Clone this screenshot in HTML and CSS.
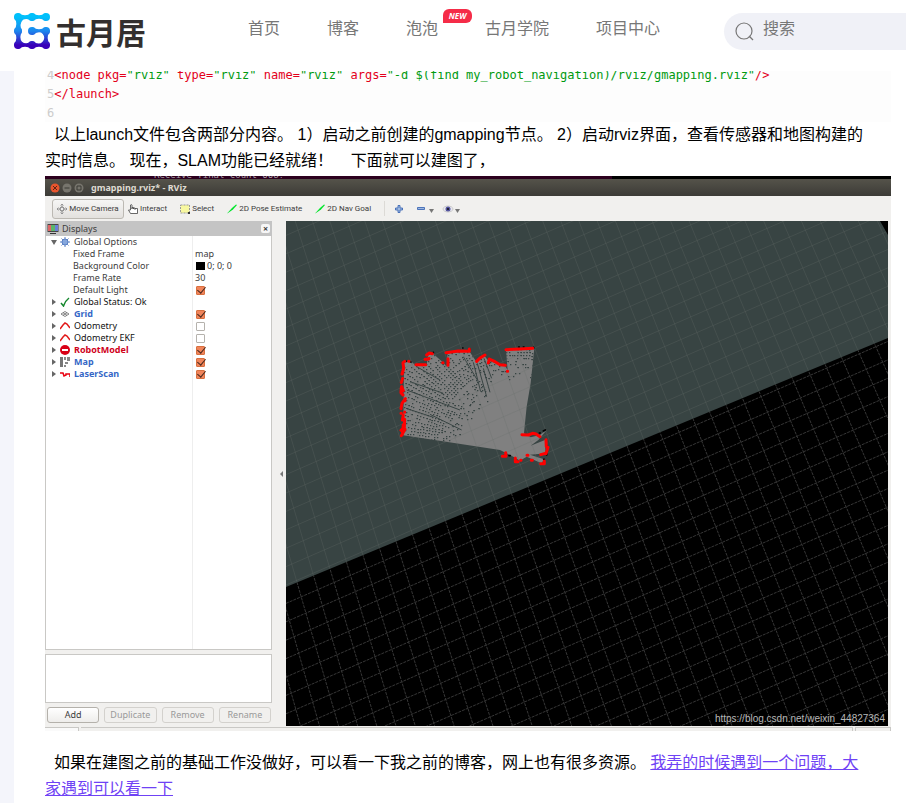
FILE: index.html
```html
<!DOCTYPE html>
<html lang="zh-CN">
<head>
<meta charset="utf-8">
<title>古月居</title>
<link rel="stylesheet" href="styles.css">
</head>
<body>
<header class="site-header">
  <a class="logo" href="#">
    <svg class="logo-mark" viewBox="0 0 108 108" aria-hidden="true">
      <defs>
        <linearGradient id="brand" gradientUnits="userSpaceOnUse" x1="0" y1="12" x2="0" y2="96">
          <stop offset="0" stop-color="#00c0fb"/><stop offset=".5" stop-color="#1d87ee"/><stop offset="1" stop-color="#3a00b9"/>
        </linearGradient>
      </defs>
      <g fill="url(#brand)">
        <circle cx="12" cy="12" r="12"/><circle cx="54" cy="12" r="12"/><circle cx="96" cy="12" r="12"/>
        <circle cx="12" cy="54" r="12"/><circle cx="54" cy="54" r="12"/><circle cx="96" cy="54" r="12"/>
        <circle cx="12" cy="96" r="12"/><circle cx="54" cy="96" r="12"/><circle cx="96" cy="96" r="12"/>
        <path d="M12 0Q33 14 54 0Q75 14 96 0V24Q75 10 54 24Q40 14 27 20Q14 33 24 54Q14 75 24 86Q36 96 54 84Q75 98 85 87Q96 75 86 62Q75 52 54 66V42Q75 56 96 42L108 54Q94 75 108 96L96 108Q75 94 54 108Q33 94 12 108L0 96Q14 75 0 54Q14 33 0 12Z"/>
      </g>
    </svg>
    <span class="logo-name">古月居</span>
  </a>
  <nav class="nav">
    <a href="#">首页</a>
    <a href="#">博客</a>
    <a href="#" class="has-badge">泡泡<span class="badge">NEW</span></a>
    <a href="#">古月学院</a>
    <a href="#">项目中心</a>
  </nav>
  <label class="search">
    <svg viewBox="0 0 20 20" aria-hidden="true"><circle cx="9" cy="9" r="8"/><path d="M14 14l4 4"/></svg>
    <input type="search" placeholder="搜索" aria-label="搜索">
  </label>
</header>

<main class="article">
<pre class="code"><span class="num">4</span>&lt;node pkg=<b>"rviz"</b> type=<b>"rviz"</b> name=<b>"rviz"</b> args=<b>"-d $(find my_robot_navigation)/rviz/gmapping.rviz"</b>/&gt;
<span class="num">5</span>&lt;/launch&gt;
<span class="num">6</span></pre>
<p>&nbsp; 以上launch文件包含两部分内容。 1）启动之前创建的gmapping节点。 2）启动rviz界面，查看传感器和地图构建的<br>实时信息。 现在，SLAM功能已经就绪！ &nbsp; &nbsp;下面就可以建图了，</p>

<section class="rviz" aria-label="RViz">
  <div class="terminal"><span>Receive final count 668!</span></div>
  <div class="titlebar">
    <svg class="window-buttons" viewBox="0 0 34 10" aria-hidden="true">
      <circle cx="5" cy="5" r="4.5" fill="#e9552d"/><path d="M3 3l4 4M7 3l-4 4" stroke="#5b2416"/>
      <circle cx="17" cy="5" r="4.5" fill="#77756d"/><path d="M14.5 5h5" stroke="#3b3a35"/>
      <circle cx="29" cy="5" r="4.5" fill="#77756d"/><path d="M27 3h4v4h-4z" fill="none" stroke="#3b3a35"/>
    </svg>
    <span>gmapping.rviz* - RViz</span>
  </div>
  <div class="toolbar">
    <button class="tool active"><svg viewBox="0 0 10 10"><path d="M5 0v10M0 5h10M3.500 1.500L5 0l1.500 1.500M3.500 8.500L5 10l1.500-1.500M1.500 3.500L0 5l1.500 1.500M8.500 3.500L10 5 8.500 6.500" fill="none" stroke="#888" stroke-width=".8"/><circle cx="5" cy="5" r="2" fill="#eee" stroke="#777"/></svg>Move Camera</button>
    <button class="tool tool-hand"><svg viewBox="0 0 10 10"><path d="M2.5 6V1q1-1 1.500 0v4V3.500h1.500V5 4H7v1.500-1h2.500V9.500H2.500L.5 6z" fill="#fff" stroke="#444" stroke-width=".8"/></svg>Interact</button>
    <button class="tool tool-select"><svg viewBox="0 0 10 10"><path d="M.5 1h9v8h-9z" fill="#f8f8a0" stroke="#999" stroke-dasharray="2 1"/><path d="M8 8h2v2H8z" fill="#333"/></svg>Select</button>
    <button class="tool"><svg viewBox="0 0 10 10"><path d="M0 9.500L5 4l4-3.500 1 .5-4 4.500L1 9z" fill="#00e52b"/></svg>2D Pose Estimate</button>
    <button class="tool tool-goal"><svg viewBox="0 0 10 10"><path d="M0 9.500L5 4l4-3.500 1 .5-4 4.500L1 9z" fill="#00e52b"/></svg>2D Nav Goal</button>
    <span class="divider"></span>
    <svg class="tool-icons" viewBox="0 0 66 10" aria-hidden="true">
      <path d="M3 1.500h2v2.500h2.500v2H5v2.500H3V6H.5V4H3z" fill="#9db8e0" stroke="#3f69b4" stroke-width=".9"/>
      <path d="M22.500 3.500h7v2h-7z" fill="#9db8e0" stroke="#3f69b4" stroke-width=".9"/>
      <path d="M34 5h5l-2.500 4zM60 5h5l-2.500 4z" fill="#777"/>
      <ellipse cx="53" cy="5" rx="5" ry="3" fill="#e8e8ef" stroke="#bbb" stroke-width=".7"/><circle cx="53" cy="5" r="2.500" fill="#55559e"/><circle cx="53" cy="5" r="1" fill="#111"/>
    </svg>
  </div>
  <div class="workspace">
    <aside class="displays">
      <h2><svg viewBox="0 0 12 12" aria-hidden="true"><path d="M.5 1h11v8H.5z" fill="#444"/><path d="M1 2h3v6H1z" fill="#d66"/><path d="M4 2h4v6H4z" fill="#5bb56b"/><path d="M8 2h3v6H8z" fill="#6a7fd8"/><path d="M3 10h6v1H3z" fill="#333"/></svg>Displays<button class="close" aria-label="Close">×</button></h2>
      <ul class="tree">
        <li class="open"><i></i><svg viewBox="0 0 10 10"><circle cx="5" cy="5" r="3" fill="#86a7dd" stroke="#5a80c4"/><path d="M5 0v10M0 5h10M1.500 1.500l7 7M8.500 1.500l-7 7" stroke="#5a80c4" stroke-dasharray="2 6 2"/></svg><span>Global Options</span><em></em></li>
        <li class="sub"><span>Fixed Frame</span><em>map</em></li>
        <li class="sub"><span>Background Color</span><em><s></s>0; 0; 0</em></li>
        <li class="sub"><span>Frame Rate</span><em>30</em></li>
        <li class="sub"><span>Default Light</span><em><input type="checkbox" aria-label="Default Light" checked></em></li>
        <li class="status"><i></i><svg viewBox="0 0 10 10"><path d="M1 6l2.500 3Q5 4 9 1" fill="none" stroke="#15872d" stroke-width="1.500"/></svg><span>Global Status: Ok</span><em></em></li>
        <li class="on"><i></i><svg viewBox="0 0 10 10"><path d="M1 5l4-2.500 4 2.500-4 2.500zM3 3.700l4 2.600M7 3.700l-4 2.600" fill="none" stroke="#666" stroke-width=".8"/></svg><span>Grid</span><em><input type="checkbox" aria-label="Grid" checked></em></li>
        <li class="status"><i></i><svg viewBox="0 0 10 10"><path d="M0 8l3-4 2-2 2 1 3 4" fill="none" stroke="#e21a1a" stroke-width="1.500"/></svg><span>Odometry</span><em><input type="checkbox" aria-label="Odometry"></em></li>
        <li class="status"><i></i><svg viewBox="0 0 10 10"><path d="M0 8l3-4 2-2 2 1 3 4" fill="none" stroke="#e21a1a" stroke-width="1.500"/></svg><span>Odometry EKF</span><em><input type="checkbox" aria-label="Odometry EKF"></em></li>
        <li class="error"><i></i><svg viewBox="0 0 10 10"><circle cx="5" cy="5" r="5" fill="#d90016"/><path d="M2 4h6v2H2z" fill="#fff"/></svg><span>RobotModel</span><em><input type="checkbox" aria-label="RobotModel" checked></em></li>
        <li class="on"><i></i><svg viewBox="0 0 10 10"><path d="M0 0h3v10H0z" fill="#777"/><path d="M4 0h2v3H4zM7 0h3v4H7zM5 5h3v2H5zM4 8h2v2H4z" fill="#888"/></svg><span>Map</span><em><input type="checkbox" aria-label="Map" checked></em></li>
        <li class="on"><i></i><svg viewBox="0 0 10 10"><path d="M0 4h3l1 3 2-1V5h4v3" fill="none" stroke="#e8000f" stroke-width="1.500"/></svg><span>LaserScan</span><em><input type="checkbox" aria-label="LaserScan" checked></em></li>
      </ul>
      <div class="description"></div>
      <div class="actions">
        <button>Add</button><button disabled>Duplicate</button><button disabled>Remove</button><button disabled>Rename</button>
      </div>
    </aside>
    <div class="splitter"><i></i></div>
    <div class="viewport">
      <svg viewBox="0 0 602 505" preserveAspectRatio="xMidYMid slice" aria-hidden="true">
        <defs>
          <clipPath id="known"><path d="M0 0H594L602 14V117L0 366Z"/></clipPath>
          <clipPath id="unknown"><path d="M0 366L602 117V505H0Z"/></clipPath>
          <clipPath id="room"><path d="M72 97L95 95 105 105 140 105 145 75 158 70 190 98 200 110 203 70 268 64 290 97 313 77 325 92 375 108 383 120 378 60 463 55 452 160 440 230 432 310 390 370 360 360 70 316Z"/></clipPath>
        </defs>
        <path d="M0 0H602V505H0Z" fill="#000"/>
        <path d="M0 0H594L602 14V117L0 366Z" fill="#384443"/>
        <g transform="translate(94 109) scale(.3333)">
          <path d="M72 97L95 95 105 105 140 105 145 75 158 70 190 98 200 110 203 70 268 64 290 97 313 77 325 92 375 108 383 120 378 60 463 55 452 160 440 230 432 310 452 322 480 315 500 300 475 330 452 347 495 330 498 370 450 374 492 388 485 400 440 380 420 392 400 380 360 360 70 316Z" fill="#808080"/>
          <g clip-path="url(#room)"><path id="gaps" fill="#384443"/></g>
          <path d="M280 97L302 185M292 100L320 200M312 85L335 145M310 115L330 187M250 80L292 150M78 235L160 262M80 180L240 240M90 155L190 190M150 253L245 300M110 110L180 150" stroke="#384443" stroke-width="3"/>
        </g>
        <g clip-path="url(#known)"><path class="grid-known" id="grid-a"/></g>
        <g clip-path="url(#unknown)"><path class="grid-unknown" id="grid-b"/></g>
        <g transform="translate(94 109) scale(.3333)" fill="none" stroke-linecap="round" stroke-linejoin="round">
          <path d="M77 94h2M91 96h2M160 67v2M248 54h1M270 57v3M416 51h2M430 51h2M461 52v3M478 309h3M490 303l6-3M491 388h2M500 345v30M387 377h4" stroke="#000" stroke-width="5"/>
          <path d="M70 97L74 94M86 94H87M69 99L71 113 67 132M71 116L66 132M68 145L64 158M65 170L70 182M64 173L63 188 69 195M76 206L66 220 63 236M75 207V212M63 250H64M74 246V247M70 256L67 270M74 268L73 292 63 301M70 284L67 314M75 298L64 317M108 104H137M135 88H144M140 75L148 69 157 71M147 85V86M198 68L235 63 267 64M268 57V64M188 98H189M204 86V106M290 94L300 84 315 75M325 99L328 87 345 95 360 104 376 106M382 124H383M378 59L420 57 458 55M426 314L445 315 458 310 468 312 480 320M498 329L499 350 504 352 498 371M482 374L498 370M367 379H378L377 368M406 384V395L414 395M422 391H423M441 376H444M454 391H457M482 401H493L493 393" stroke="#ff0000" stroke-width="9"/>
        </g>
      </svg>
      <span class="watermark">https://blog.csdn.net/weixin_44827364</span>
    </div>
  </div>
  <div class="statusbar"><i></i><i></i><i></i></div>
</section>

<p class="closing">&nbsp; 如果在建图之前的基础工作没做好，可以看一下我之前的博客，网上也有很多资源。 <a href="#">我弄的时候遇到一个问题，大<br>家遇到可以看一下</a></p>
</main>
<script src="map.js"></script>
</body>
</html>
```
FILE: styles.css
```css
* { box-sizing: border-box; }

body {
  margin: 0;
  background: #f4f5fb;
  color: #000;
  font: 16px/26px "Liberation Sans", "Noto Sans CJK SC", sans-serif;
  overflow-x: hidden;
}

button, input { font: inherit; color: inherit; }
a { color: inherit; text-decoration: none; }

.site-header {
  position: fixed;
  z-index: 2;
  top: 0;
  left: 0;
  right: 0;
  height: 71px;
  padding-left: 14px;
  display: flex;
  align-items: flex-start;
  background: #fff;
  overflow: hidden;
}

.logo { display: flex; align-items: center; gap: 6px; margin-top: 13px; width: 234px; height: 36px; flex: none; }
.logo-mark { width: 36px; height: 36px; }
.logo-name { font: 700 30px/36px "Noto Sans CJK SC", sans-serif; color: #332f2e; }

.nav { display: flex; gap: 47px; margin-top: 16px; color: #777; white-space: nowrap; }
.has-badge { position: relative; }
.badge {
  position: absolute;
  left: 37px;
  top: -7px;
  width: 29px;
  height: 14px;
  border-radius: 6px 6px 6px 0;
  background: #f52c48;
  color: #fff;
  font: italic bold 8px/14px "Open Sans", sans-serif;
  text-align: center;
}

.search {
  flex: 1;
  min-width: 180px;
  height: 37px;
  margin: 13px 0 0 64px;
  padding-left: 11px;
  display: flex;
  gap: 8px;
  border-radius: 19px 0 0 19px;
  background: #f0f1f7;
}
.search svg { width: 20px; height: 20px; margin-top: 9px; fill: none; stroke: #777; stroke-width: 1.2; flex: none; }
.search input { width: 100%; height: 32px; padding: 0; border: 0; background: none; outline: 0; }
.search input::placeholder { color: #777; }

.article {
  margin-left: 14px;
  min-height: 100vh;
  padding: 66px 15px 0 31px;
  background: #fff;
}

.code {
  margin: 0;
  height: 56px;
  padding-left: 2px;
  background: #fdfdfd;
  color: #e3001b;
  font: 12px/19px "DejaVu Sans Mono", monospace;
}
.code b { color: #009a10; font-weight: normal; }
.num { color: #ccc; }

p { margin: 0; white-space: nowrap; }
.closing { margin-top: 19px; }
.closing a { color: #6f42f5; text-decoration: underline; }

.rviz {
  margin-top: 2px;
  background: #f1f0ee;
  color: #3c3c3c;
  font: 9px/12px "Noto Sans", sans-serif;
}
.rviz button { cursor: pointer; }

.terminal {
  height: 3px;
  overflow: hidden;
  background: linear-gradient(90deg, #2c001e 0 67%, #000 67%);
  color: #a89ca4;
  font: 9px/12px "DejaVu Sans Mono", monospace;
}
.terminal span { display: block; margin: -7px 0 0 109px; }

.titlebar {
  height: 17px;
  padding-left: 5px;
  display: flex;
  align-items: center;
  gap: 7px;
  background: linear-gradient(#55534a, #3c3b37);
  color: #dfdbd2;
  font-weight: bold;
}
.window-buttons { width: 34px; height: 10px; }

.toolbar { height: 25px; padding-left: 7px; display: flex; align-items: center; font: 8px/12px Roboto, sans-serif; }
.tool {
  height: 20px;
  padding: 0;
  border: 0;
  display: flex;
  align-items: center;
  gap: 2px;
  background: none;
  white-space: nowrap;
}
.tool svg { width: 10px; height: 10px; }
.tool.active { width: 72px; justify-content: center; border: 1px solid #bcb9b3; border-radius: 3px; background: linear-gradient(#f6f6f5, #e3e1de); }
.tool-hand { margin-left: 4px; }
.tool-select { margin: 0 13px; }
.tool-goal { margin-left: 13px; }
.divider { width: 1px; height: 15px; margin: 0 10px 0 13px; background: #dcdad6; }
.tool-icons { width: 66px; height: 10px; }

.workspace { display: flex; min-height: 505px; padding-right: 3px; }
.displays { width: 227px; flex: none; display: flex; flex-direction: column; }
.displays h2 {
  margin: 0;
  height: 15px;
  padding: 0 2px;
  display: flex;
  align-items: center;
  gap: 3px;
  background: #c4c4c4;
  font: 9px/12px "Noto Sans", sans-serif;
}
.displays h2 svg { width: 12px; height: 12px; }
.close { width: 9px; height: 9px; margin-left: auto; padding: 0; border: 0; border-radius: 2px; background: #f6f6f6; font: bold 9px/9px "Noto Sans", sans-serif; }

.tree {
  flex: 1;
  margin: 0;
  padding: 0;
  border: 1px solid #c9c8c5;
  border-top: 0;
  list-style: none;
  background: linear-gradient(90deg, #fff 146px, #eee 146px 147px, #fff 147px);
}
.tree li { height: 12px; display: flex; align-items: center; }
.tree i { width: 0; height: 0; margin: 0 4px 0 6px; border: solid transparent; border-width: 3px 0 3px 4px; border-left-color: #666; }
.tree .open i { border-width: 5px 3px 0; border-color: #666 transparent transparent; margin: 0 3px 0 5px; }
.tree svg { width: 10px; height: 10px; margin-right: 4px; }
.tree span { flex: 1; white-space: nowrap; }
.tree .sub span { padding-left: 27px; }
.tree em { width: 76px; display: flex; align-items: center; font-style: normal; }
.tree s { width: 9px; height: 8px; margin: 0 2px 0 1px; background: #000; }
.tree .status { color: #111; }
.tree .on { color: #3567c6; }
.tree .error { color: #d0021b; }
.tree .on span, .tree .error span { font-weight: bold; }
.tree input {
  appearance: none;
  width: 9px;
  height: 9px;
  margin: 0 0 0 1px;
  border: 1px solid #b5b2ad;
  border-radius: 1px;
  background: #fff;
}
.tree input:checked { border-color: #d9703f; background: #f0845a; }
.tree input:checked::after {
  content: "";
  display: block;
  width: 4px;
  height: 7px;
  margin: -2px 0 0 2px;
  border: solid #46281d;
  border-width: 0 1px 1px 0;
  transform: rotate(40deg);
}

.description { height: 49px; margin-top: 4px; border: 1px solid #c9c8c5; background: #fff; }
.actions { display: grid; grid-template-columns: repeat(4, 1fr); gap: 5px; padding: 4px 1px 3px 2px; }
.actions button {
  height: 16px;
  padding: 0;
  border: 1px solid #b4b1ab;
  border-radius: 3px;
  background: linear-gradient(#fff, #eeedeb);
  line-height: 12px;
}
.actions button:disabled { border-color: #d3d1cd; background: #f1f0ee; color: #999; }

.splitter { width: 14px; flex: none; display: flex; align-items: center; justify-content: flex-end; }
.splitter i { margin-right: 3px; border: solid transparent; border-width: 3px 3px 3px 0; border-right-color: #777; }

.viewport { position: relative; flex: 1; height: 505px; background: #000; overflow: hidden; }
.viewport svg { display: block; width: 100%; height: 100%; }
.grid-known { fill: none; stroke: #69706a; stroke-opacity: .28; }
.grid-unknown { fill: none; stroke: #363636; stroke-dasharray: 3 1; }
.watermark { position: absolute; right: 3px; bottom: 1px; color: #b8b8b8; font: 10px/12px "Liberation Sans", sans-serif; }

.statusbar { height: 5px; padding-top: 1px; display: flex; gap: 2px; }
.statusbar i { flex: 1; border: solid #c9c8c5; border-width: 1px 1px 0 0; }
.statusbar i:first-child { flex: 0 0 34px; background: #fafafa; }
.statusbar i:last-child { flex: 0 0 36px; border-left-width: 1px; }
```
FILE: map.js
```js
// Floor grid seen in slight perspective: parallel rows, fanned columns.
const edgeY = x => 366 - 0.4136 * x;
let grid = "";
for (let y = -4; y < 790; y += 18.4) {
  grid += `M0 ${y.toFixed(1)}L602 ${(y - 262).toFixed(1)}`;
}
for (let x = -253; x < 860; x += 16.5) {
  const slope = Math.tan((16 + x / 75) * Math.PI / 180);
  const y = edgeY(x);
  grid += `M${(x - slope * y).toFixed(1)} 0L${(x + slope * (505 - y)).toFixed(1)} 505`;
}
document.getElementById("grid-a").setAttribute("d", grid);
document.getElementById("grid-b").setAttribute("d", grid);

// Unscanned cells lie along the laser rays, denser far from the sensor.
let seed = 7;
const random = () => (seed = (seed * 16807) % 2147483647) / 2147483647;
let gaps = "";
for (let deg = 184; deg < 282; deg += 1.8) {
  const a = deg * Math.PI / 180;
  const start = deg < 240 ? 150 : 190;
  for (let r = start; r < 460; r += 9) {
    const chance = Math.min(0.85, (r - start) / 130);
    if (random() > chance) continue;
    const x = Math.round((410 + r * Math.cos(a)) / 3) * 3;
    const y = Math.round((345 + r * Math.sin(a)) / 3) * 3;
    gaps += `M${x} ${y}h${random() < 0.3 ? 6 : 4}v4h-4z`;
  }
}
document.getElementById("gaps").setAttribute("d", gaps);
```
